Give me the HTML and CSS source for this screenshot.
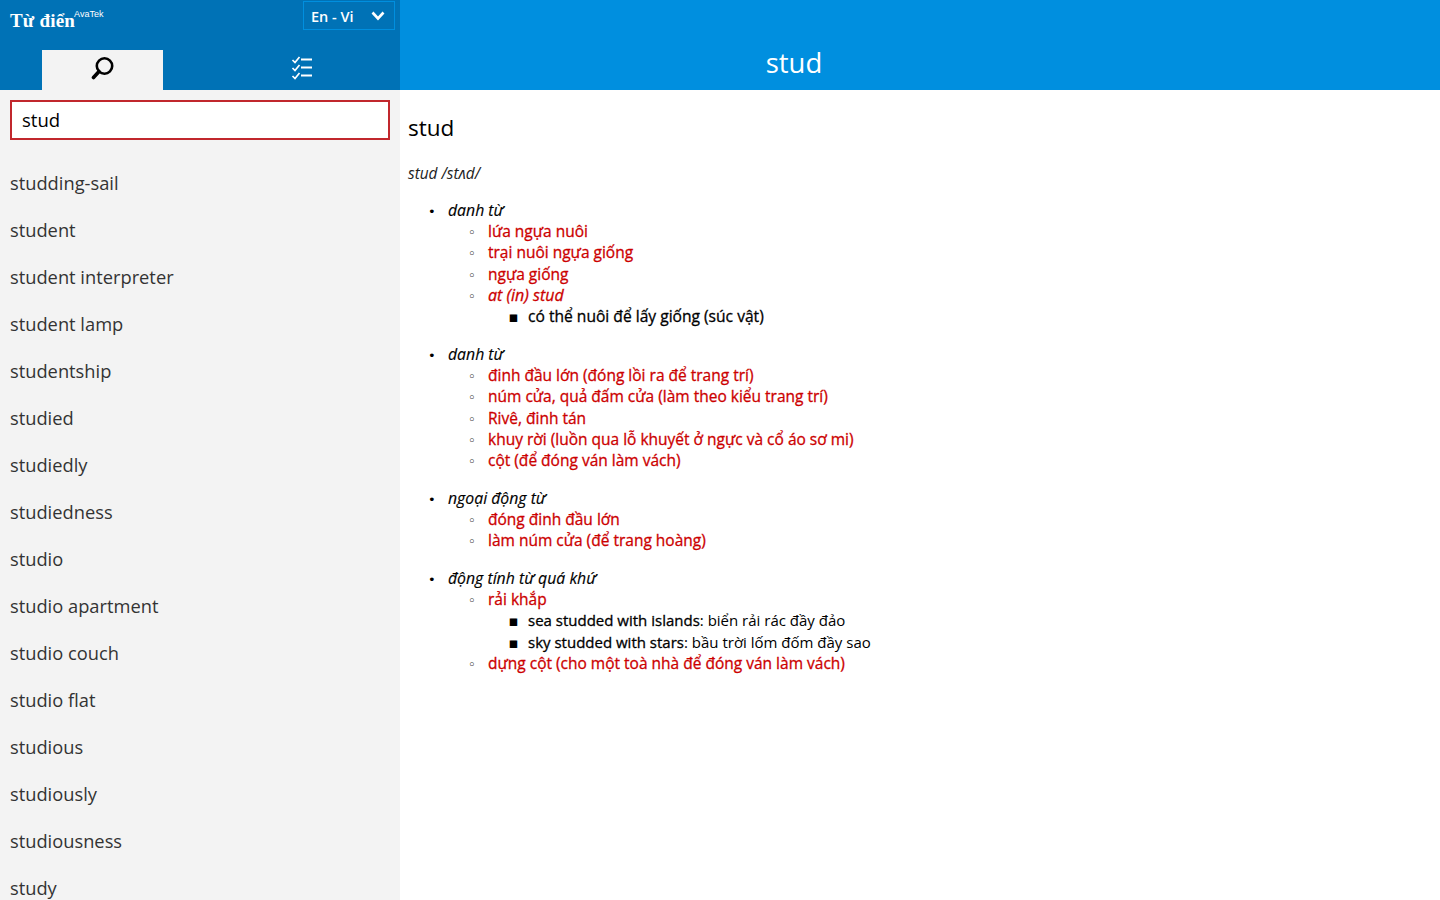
FILE: index.html
```html
<!DOCTYPE html>
<html lang="vi">

<head>
    <meta charset="utf-8">
    <title>Từ điển</title>
    <link rel="stylesheet" href="styles.css">
</head>

<body>
    <div class="app">
        <aside class="sidebar">
            <div class="sideHead">
                <div class="topRow">
                    <div class="logo">Từ điển<span class="logoMark">AvaTek</span></div>
                    <div class="langSelect">
                        <span class="langText">En - Vi</span>
                        <svg width="14" height="10" viewBox="0 0 14 10"><path d="M1.5 1.5 7 7.5l5.500-6" fill="none" stroke="#fff" stroke-width="2.6"/></svg>
                    </div>
                </div>
                <div class="tabs">
                    <div class="tab active">
                        <svg width="24" height="24" viewBox="0 0 24 24"><circle cx="13.500" cy="10" r="7.700" fill="none" stroke="#000" stroke-width="2.600"/><path d="M8 15.500 2.500 21.500" stroke="#000" stroke-width="3.600" stroke-linecap="round"/></svg>
                    </div>
                    <div class="tab">
                        <svg width="22" height="24" viewBox="0 0 22 24" fill="none" stroke="#fff">
                            <path d="M1.500 4 4 6.500 8.500 1M1.500 12 4 14.500 8.500 9M1.500 20 4 22.500 8.500 17" stroke-width="1.700"/>
                            <path d="M10 3.500h11M10 11.500h11M10 19.500h11" stroke-width="2"/>
                        </svg>
                    </div>
                </div>
            </div>
            <div class="searchBox">
                <input class="searchInput" value="stud">
            </div>
            <ul class="wordList">
                <li>studding-sail</li>
                <li>student</li>
                <li>student interpreter</li>
                <li>student lamp</li>
                <li>studentship</li>
                <li>studied</li>
                <li>studiedly</li>
                <li>studiedness</li>
                <li>studio</li>
                <li>studio apartment</li>
                <li>studio couch</li>
                <li>studio flat</li>
                <li>studious</li>
                <li>studiously</li>
                <li>studiousness</li>
                <li>study</li>
            </ul>
        </aside>
        <main class="main">
            <header class="mainHead">stud</header>
            <article class="entry">
                <h1>stud</h1>
                <p class="phonetic">stud /stʌd/</p>
                <ul class="groups">
                    <li>
                        <i class="kind">danh từ</i>
                        <ul>
                            <li><span class="mean">lứa ngựa nuôi</span></li>
                            <li><span class="mean">trại nuôi ngựa giống</span></li>
                            <li><span class="mean">ngựa giống</span></li>
                            <li><i class="mean">at (in) stud</i>
                                <ul>
                                    <li><span class="phrase wide">có thể nuôi để lấy giống (súc vật)</span></li>
                                </ul>
                            </li>
                        </ul>
                    </li>
                    <li>
                        <i class="kind">danh từ</i>
                        <ul>
                            <li><span class="mean">đinh đầu lớn (đóng lồi ra để trang trí)</span></li>
                            <li><span class="mean">núm cửa, quả đấm cửa (làm theo kiểu trang trí)</span></li>
                            <li><span class="mean">Rivê, đinh tán</span></li>
                            <li><span class="mean">khuy rời (luồn qua lỗ khuyết ở ngực và cổ áo sơ mi)</span></li>
                            <li><span class="mean">cột (để đóng ván làm vách)</span></li>
                        </ul>
                    </li>
                    <li>
                        <i class="kind">ngoại động từ</i>
                        <ul>
                            <li><span class="mean">đóng đinh đầu lớn</span></li>
                            <li><span class="mean">làm núm cửa (để trang hoàng)</span></li>
                        </ul>
                    </li>
                    <li>
                        <i class="kind">động tính từ quá khứ</i>
                        <ul>
                            <li><span class="mean">rải khắp</span>
                                <ul>
                                    <li><span class="phrase">sea studded with islands</span>: biển rải rác đầy đảo</li>
                                    <li><span class="phrase">sky studded with stars</span>: bầu trời lốm đốm đầy sao</li>
                                </ul>
                            </li>
                            <li><span class="mean">dựng cột (cho một toà nhà để đóng ván làm vách)</span></li>
                        </ul>
                    </li>
                </ul>
            </article>
        </main>
    </div>
</body>

</html>
```

FILE: styles.css
```css
html, body {
    height: 100%;
}

body {
    margin: 0;
    overflow: hidden;
    font-family: "Open Sans", "Noto Sans", sans-serif;
    color: #000;
    background-color: #fff;
}

.app {
    display: flex;
    height: 900px;
    overflow: hidden;
}

.sidebar {
    width: 400px;
    flex-shrink: 0;
    background-color: #f3f3f3;
    overflow: hidden;
}

.sideHead {
    height: 90px;
    display: flex;
    flex-direction: column;
    justify-content: space-between;
    background-color: #0072b6;
}

.topRow {
    display: flex;
    justify-content: space-between;
    align-items: flex-start;
    padding-top: 1px;
    padding-left: 10px;
    padding-right: 5px;
}

.logo {
    display: flex;
    align-items: flex-start;
    margin-top: 8px;
    font-family: "Liberation Serif", serif;
    font-size: 19px;
    font-weight: bold;
    letter-spacing: 0.2px;
    line-height: 24px;
    color: #fff;
}

.logoMark {
    margin-left: -1px;
    font-family: "Liberation Sans", sans-serif;
    font-size: 9px;
    font-weight: normal;
    letter-spacing: 0;
    line-height: 10px;
}

.langSelect {
    box-sizing: border-box;
    width: 92px;
    height: 29px;
    display: flex;
    justify-content: space-between;
    align-items: center;
    padding-left: 7px;
    padding-right: 9px;
    border: 1px solid #008fdf;
    font-size: 14.500px;
    font-weight: 600;
    color: #fff;
}

.langText {
    padding-top: 2px;
}

.tabs {
    display: flex;
    gap: 78px;
    padding-left: 42px;
    height: 40px;
}

.tab {
    width: 121px;
    padding-bottom: 4px;
    box-sizing: border-box;
    display: flex;
    justify-content: center;
    align-items: center;
}

.tab.active {
    background-color: #f3f3f3;
}

.searchBox {
    padding: 10px;
}

.searchInput {
    box-sizing: border-box;
    display: block;
    width: 100%;
    height: 40px;
    padding: 0 10px 2px;
    border: 2px solid #c1272d;
    border-radius: 0;
    outline: none;
    background-color: #fff;
    font-family: inherit;
    font-size: 18.500px;
    color: #000;
}

.wordList {
    list-style: none;
    margin: 0;
    padding: 0;
    padding-top: 9px;
    padding-left: 10px;
}

.wordList li {
    height: 47px;
    line-height: 47px;
    font-size: 18.300px;
    color: #333;
}

.main {
    flex: 1;
}

.mainHead {
    height: 90px;
    box-sizing: border-box;
    padding-top: 44px;
    padding-right: 252px;
    text-align: center;
    font-size: 27.500px;
    line-height: 38px;
    color: #fff;
    background-color: #008fdf;
}

.entry {
    padding-left: 8px;
    padding-top: 22px;
    font-size: 15px;
    line-height: 21.330px;
}

h1 {
    margin: 0;
    font-size: 22.500px;
    font-weight: normal;
    line-height: 32px;
}

.phonetic {
    margin: 19px 0 15.500px;
    font-size: 15.400px;
    font-style: italic;
    color: #222;
}

.groups, .groups ul {
    margin: 0;
    padding-left: 40px;
}

.groups > li {
    margin-bottom: 16px;
}

.groups > li::marker {
    content: "•\00a0\00a0\00a0";
    font-family: "DejaVu Sans", sans-serif;
    font-size: 13px;
    color: #000;
}

.groups > li > ul > li::marker {
    content: "◦\00a0\00a0\00a0";
    font-family: "DejaVu Sans", sans-serif;
    font-size: 13px;
    color: #000;
}

.groups ul ul > li::marker {
    content: "▪\00a0\00a0";
    font-family: "DejaVu Sans", sans-serif;
    font-size: 15px;
    color: #000;
}

.kind {
    font-size: 15.800px;
    -webkit-text-stroke: 0.15px #000;
}

.mean {
    font-size: 15.500px;
    color: #cc0000;
    -webkit-text-stroke: 0.3px #cc0000;
}

i.mean {
    font-size: 16px;
}

.phrase {
    -webkit-text-stroke: 0.3px #000;
}

.phrase.wide {
    font-size: 15.600px;
}
```
